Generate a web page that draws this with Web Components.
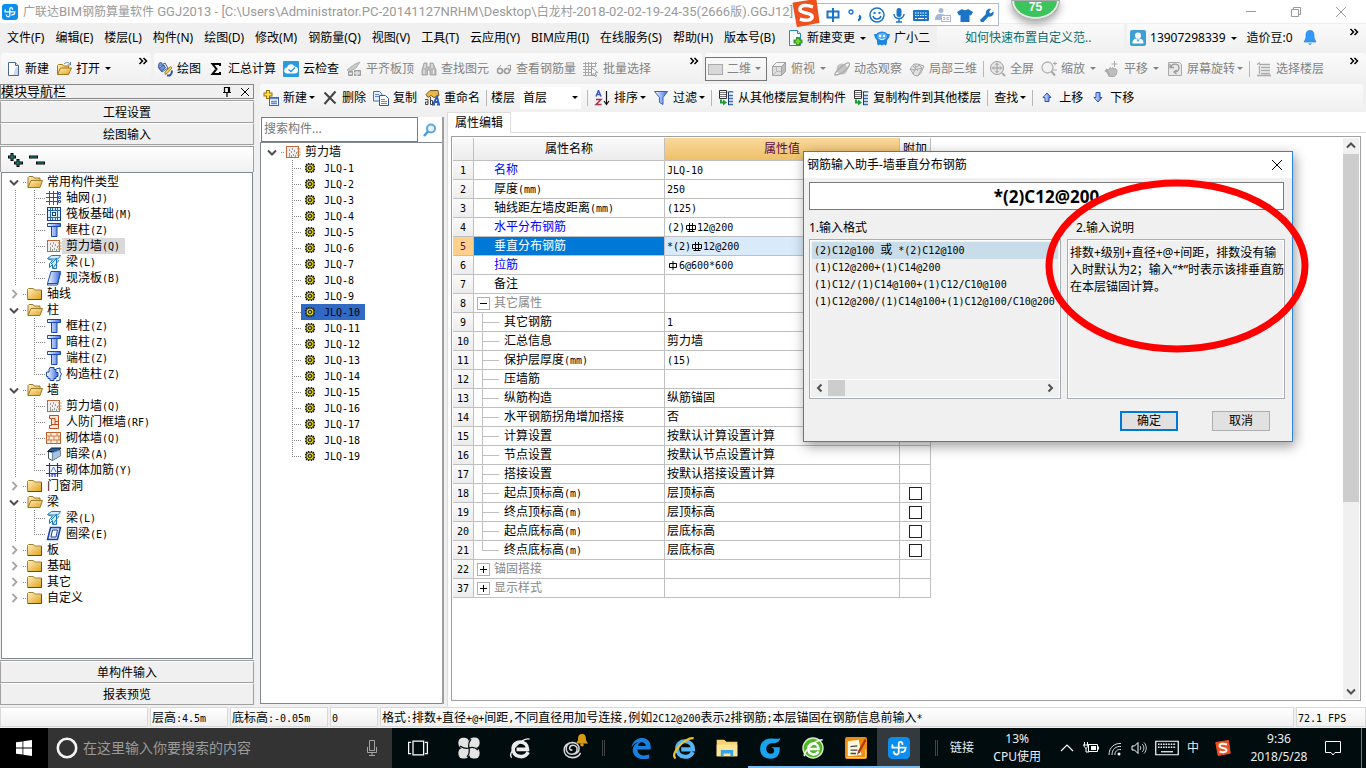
<!DOCTYPE html>
<html lang="zh-CN">
<head>
<meta charset="utf-8">
<title>广联达BIM钢筋算量软件 GGJ2013</title>
<style>
html, body { margin: 0; height: 100%; }
body { font: 12px/16px "Noto Sans", "Noto Sans CJK SC", sans-serif; color: #000; background: #f0f0f0; overflow: hidden; }
</style>
</head>
<body>
<ggj-desktop></ggj-desktop>
<script>
const BASE = `
*{box-sizing:border-box}
:host{display:block}
:host([hidden]){display:none}
button,input,select{font:inherit;color:inherit;margin:0;padding:0;border:0;background:none;border-radius:0;outline:0}
button{cursor:default;white-space:nowrap}
a{color:inherit;text-decoration:none}
ul{list-style:none;margin:0;padding:0}
.a{font-family:"DejaVu Sans Mono","Liberation Mono",monospace;font-size:10px;line-height:10px;white-space:pre}
`;
function define(name, css, render) {
  customElements.define(name, class extends HTMLElement {
    connectedCallback() {
      if (this.shadowRoot) return;
      const root = this.attachShadow({ mode: "open" });
      root.innerHTML = "<style>" + BASE + css + "</style>" + render(this);
    }
  });
}
// Half-width characters use a 10px monospace face beside 12px ideographs.
const mix = t => t.replace(/[\x20-\x7e]+/g, m => `<span class="a">${m}</span>`);

const G = "#9c9c9c", L = "#c8c8c8";
const folderShade = `<defs><linearGradient id="f" x1="0" y1="0" x2="1" y2="1"><stop offset="0" stop-color="#fff3b8"/><stop offset="1" stop-color="#e0a020"/></linearGradient></defs>`;
const blueShade = `<defs><linearGradient id="b"><stop offset="0" stop-color="#fff"/><stop offset="1" stop-color="#3a6ee0"/></linearGradient></defs>`;
const ICONS = {
  app: `<rect width="16" height="16" rx="3" fill="#0a8ff0"/><path d="M10.500 5.200C10.500 3 7.800 3 7.800 5.200V11c0 2.500-3.500 2.200-3.500-.2M3.200 6v1.800h9.600c0 2.200-1 3.200-3 3.200" fill="none" stroke="#fff" stroke-width="1.300" stroke-linecap="round"/>`,
  page: `<path d="M3.500 1.500h7l3 3v10h-10z" fill="#fff" stroke="#4a6890"/><path d="M10.500 1.500v3h3" fill="#dce8f6" stroke="#4a6890"/><path d="M11 6h2v8h-5z" fill="#c8d8ee"/>`,
  open: folderShade + `<path d="M1.500 13.500v-9l1-1h4l1 1.500h5v2" fill="url(#f)" stroke="#a87820"/><path d="M1.500 13.500l3-6.500h11l-3 6.500z" fill="url(#f)" stroke="#a87820"/><path d="M8 3c2-2 5-2 6 .5M14.500 1v3h-3" fill="none" stroke="#6a86a8"/>`,
  fopen: folderShade + `<path d="M1 13.500v-10l1-1h4l1 1.500h6v3" fill="url(#f)" stroke="#9a7a30"/><path d="M1 13.500l3-7h11.500l-2.500 7z" fill="url(#f)" stroke="#9a7a30"/>`,
  fclosed: folderShade + `<path d="M.5 13.500v-10l1-1h5l1 1.500h7v9.500z" fill="url(#f)" stroke="#a08038"/><path d="M14.500 4.500v9H1" fill="none" stroke="#6a5010"/>`,
  more: `<path d="M4.500 5l3 3-3 3M8.500 5l3 3-3 3" fill="none" stroke="#000" stroke-width="1.500"/>`,
  paint: `<path d="M1 6l7-4 3 5-6 4z" fill="#f4f8ff" stroke="#3a5c98"/><path d="M1.500 5c0-5 4-4 5 0M2 7l5-3 1.500 3-4 3z" fill="#6a94dc" stroke="#3a5c98"/><path d="M15 7l-5 5.500-2 1v-2.500L13.500 5.500z" fill="#f0c850" stroke="#80611c" stroke-width=".7"/><path d="M10 14.500c3 .5 5-1 5-5" stroke="#2850a8" fill="none" stroke-width="2"/>`,
  sigma: `<path d="M12 5V3H4.500L8.500 8l-4 5H12v-2" fill="none" stroke="#000" stroke-width="2"/>`,
  cloud: `<rect width="16" height="16" rx="1" fill="#2b9be0"/><path d="M4.500 12.500a3 3 0 0 1-.5-6 4 4 0 0 1 7.500-1 3.500 3.500 0 0 1 0 7z" fill="#fff"/><path d="M5.500 8.500l2.500 2 4-4" fill="none" stroke="#2b9be0" stroke-width="1.500"/>`,
  level: `<path d="M1 9l8-6 5-2-4 6-7 4z" fill="${L}" stroke="#b4b4b4"/><path d="M2.500 10.500h4v4h-4zM8.500 9.500h6v5h-6z" fill="#b8b8b8" stroke="${G}"/><path d="M8 12h6M11 10v5M3 12.500h3" stroke="#eee"/>`,
  bino: `<path d="M3 2h3v4h3V2h3l3 7v5H9V9H6.500v5H1V9z" fill="#bcbcbc" stroke="${G}" stroke-width=".8"/><path d="M4 3v4M11 3v4M3 9v4M12.500 9v4" stroke="#eee"/>`,
  glasses: `<path d="M1.500 8L5 4M14.500 10V4l-3 1" fill="none" stroke="${G}"/><circle cx="4" cy="10" r="2.500" fill="none" stroke="${G}" stroke-width="1.500"/><circle cx="11" cy="10" r="2.500" fill="none" stroke="${G}" stroke-width="1.500"/><path d="M6.500 10h2" stroke="${G}"/>`,
  batch: `<path d="M0 2.500h14M0 5.500h13M0 8.500h8M0 11.500h8M0 14.500h14M2.500 1v14M5.500 1v14M8.500 1v14M12.500 1v5" stroke="#a8a8a8" fill="none"/><path d="M8.500 6.500l6 5-2.500.5 1.500 3-1.500.5-1.500-3-2 1.500z" fill="#fff" stroke="#999"/>`,
  flat: `<rect x=".5" y="3.500" width="14" height="10" fill="#d8d8d8" stroke="#aaa"/>`,
  cube: `<path d="M1.500 5.500h9v9h-9z" fill="#ddd" stroke="#a4a4a4"/><path d="M1.500 5.500l4-4h9l-4 4z" fill="#f4f4f4" stroke="#a4a4a4"/><path d="M14.500 1.500v9l-4 4v-9z" fill="#bcbcbc" stroke="#a4a4a4"/><path d="M5.500 6v4.500H10M5.500 10.500l-4 4" stroke="#bbb" fill="none"/>`,
  orbit: `<circle cx="8" cy="8" r="5.500" fill="#c4c4c4"/><path d="M1 14C0 11 12 1 15 2s-5 12-14 12z" fill="none" stroke="#a8a8a8" stroke-width="1.300"/>`,
  part3d: `<path d="M1 8l4-5 4 0 6 2-3 7-3 3-4-1z" fill="#e2e2e2" stroke="#aaa"/><path d="M5 3l2 3 4-2M7 6l-3 7M9 3l4 4-4 8M1 8l4 1 8-2M4 5l5 5" fill="none" stroke="#a8a8a8"/>`,
  full: `<circle cx="7" cy="7" r="6.500" fill="#e4e4e4" stroke="${G}"/><path d="M7 2.500v9M2.500 7h9M5.500 4L7 2.500 8.500 4M5.500 10L7 11.500 8.500 10M4 5.500L2.500 7 4 8.500M10 5.500L11.500 7 10 8.500" fill="none" stroke="${G}"/><path d="M12 12l3 3" stroke="#aaa" stroke-width="2"/>`,
  zoom: `<circle cx="6.500" cy="6.500" r="5.500" fill="#f2f2f2" stroke="#b4b4b4" stroke-width="1.300"/><path d="M10.500 10.500l3.500 4" stroke="#a8a8a8" stroke-width="2"/><path d="M12 2.500h4M14 .5v4M12 9h4" stroke="#aaa"/>`,
  pan: `<path d="M2 8l3 1 1-2.500 1.500 1 1.500-1 1 1.500 1.500-.5 1.500 2-.5 3.500-2 2.500H5z" fill="#bdbdbd" stroke="#aaa"/><path d="M1 9.500l2.500 1.500 2 3" stroke="#aaa" fill="none" stroke-width="2"/><path d="M10.500 0v6M7.500 3h6" stroke="#aaa"/>`,
  rotate: `<path d="M1.500 1.500h11l2 2v11h-13z" fill="#e8e8e8" stroke="#aaa"/><path d="M4 6c1-4 8-4 8 1 0 2-2 4-4 4M3 3v3.500h4M9.500 9L7 11l2.500 2" fill="none" stroke="${G}" stroke-width="1.300"/>`,
  floors: `<path d="M3 3.500h11M5 6.500h9M1 3.500l3-2M5 9.500h9M3.500 5v8M5 12.500h9M1 14.500h14" stroke="#aaa" stroke-width="1.300" fill="none"/>`,
  pagenew: `<path d="M2.500.500h8l3 3v12h-11z" fill="#f4fafd" stroke="#2a8ab8"/><path d="M10.500.500v3h3" fill="#d0e8f4" stroke="#2a8ab8"/><path d="M11 7v9M6.500 11.500h9" stroke="#3a9a20" stroke-width="4"/><path d="M11 9v5M8.500 11.500h5" stroke="#78d838" stroke-width="2"/>`,
  robot: `<ellipse cx="8" cy="7" rx="6.500" ry="5.500" fill="#1f86e0"/><path d="M0 4l3 0v5l-2-1zM16 4l-3 0v5l2-1zM3 10h10v3l-1 2.500-2-1-2 1-2-1-2 1-1-2.500z" fill="#1f86e0"/><ellipse cx="8" cy="6.500" rx="5" ry="3.800" fill="#58b0f4"/><circle cx="6" cy="6" r="1.200" fill="#fff"/><circle cx="10" cy="6" r="1.200" fill="#fff"/><path d="M5.500 8.500c1 1.500 4 1.500 5 0" stroke="#fff" fill="none"/>`,
  user: `<rect width="16" height="16" rx="2" fill="#3f9fd2"/><circle cx="8" cy="5.500" r="3" fill="#fff"/><path d="M2.500 13.500c0-4 2-4.500 3.500-5h4c1.500.5 3.500 1 3.500 5z" fill="#fff"/><path d="M6.500 9.500L8 12l1.500-2.500z" fill="#3f9fd2"/>`,
  bell: `<path d="M8 .5c-4 0-4 3-4 6 0 2-1 3.500-2 5.500h12c-1-2-2-3.500-2-5.500 0-3 0-6-4-6z" fill="#3498f8" stroke="#1878e0" stroke-width=".6"/><path d="M6 13.500h4l-2 1.500z" fill="#1878e0"/>`,
  addnew: `<path d="M5 0v9M.5 4.500h9" stroke="#967010" stroke-width="4"/><path d="M5 1v7M1.500 4.500h7" stroke="#ffe040" stroke-width="2"/><rect x="6.500" y="7.500" width="9" height="8" fill="#fff" stroke="#3c64b0"/><path d="M7 8.500h8M8 11.500h6M8 13.500h6" stroke="#5c88d8" stroke-width="1.500"/>`,
  del: `<path d="M2.500 2.500l11 11M13.500 1.500L2.500 14" stroke="#444" stroke-width="2" fill="none"/>`,
  copy: `<path d="M.5 1.500h6l2.500 2.500v7H.500z" fill="#e8f0fc" stroke="#4870b8"/><path d="M6.500 5.500h6l3 3v7h-9z" fill="#fff" stroke="#3058a8"/><path d="M2 4.500h4M2 6.500h4M8 9.500h4M8 11.500h6M8 13.500h6" stroke="#5c88d8"/>`,
  rename: `<path d="M2 4.500l4-4h8l1 5-5 2-3-2-3 2z" fill="#e8b848" stroke="#7a5c1c"/><path d="M9 14.500l4-8 2 8M10.500 12h4M8 14.500h3M13 14.500h3" fill="none" stroke="#2858c0" stroke-width="1.800"/><path d="M1 9.500h3v5H1.500v-2.500H4M6.500 7v7.500h2v-4H7" stroke="#444" fill="none"/>`,
  sort: `<path d="M2 6.500L4.500.500 7 6.500M3 4.500h3" fill="none" stroke="#3c58b8" stroke-width="1.500"/><path d="M2 9.500h5l-5 5h5.500" fill="none" stroke="#b03050" stroke-width="1.500"/><path d="M12.500 1v13M10 11l2.500 3.500L15 11" fill="none" stroke="#111" stroke-width="1.200"/>`,
  funnel: blueShade + `<path d="M1.500 1.500h13L10 7.500v7l-3.500-2v-5z" fill="url(#b)" stroke="#3464c8"/>`,
  flcopy: `<path d="M1.500.500h7v8h-7z" fill="#fff" stroke="#333"/><path d="M2 2.500h6M2 4.500h6M2 6.500h6" stroke="#777"/><path d="M10 2.500c0-1 5-1 5 0M10 5.500h5M10 8.500h5M10 11.500h5M10 14.500h5" stroke="#3c6cb0" stroke-width="1.400" fill="none"/><path d="M10.500 2v13" stroke="#1c3c78"/><path d="M3 9.500v3h2" stroke="#18a038" fill="none" stroke-width="2"/><path d="M5 9.500l4 3-4 3z" fill="#18a038"/>`,
  up: blueShade + `<path d="M8 3l4 4.500h-2v4H6v-4H4z" fill="url(#b)" stroke="#2850c0"/>`,
  down: blueShade + `<path d="M8 12L4 7.500h2v-5h4v5h2z" fill="url(#b)" stroke="#2850c0"/>`,
  pin: `<path d="M5.500 3.500h5v5h-5zM4 8.500h8M8 9v4M9.500 3.500v5" stroke="#000" fill="none" stroke-width="1.200"/>`,
  close: `<path d="M4 4l8 8M12 4l-8 8" stroke="#000" fill="none"/>`,
  dclose: `<path d="M3 3l10 10M13 3L3 13" stroke="#000" fill="none"/>`,
  expandAll: `<path d="M5 1v8M1 5h8M11 7v8M7 11h9" stroke="#000" stroke-width="3"/><path d="M5 2v6M2 5h6M11 8v6M8 11h7" stroke="#18a098"/>`,
  collapseAll: `<path d="M0 5h9M7 11h9" stroke="#000" stroke-width="3"/><path d="M1 5h7M8 11h7" stroke="#18a098"/>`,
  axis: `<path d="M3.500 1v14M7.500 1v14M11.500 1v14M0 3.500h12M0 7.500h12M0 11.500h12" stroke="#2850b8"/><path d="M12.500 2.500h2v2h-2zM12.500 6.500h2v2h-2zM12.500 10.500h2v2h-2z" fill="#fff" stroke="#2850b8"/>`,
  raft: `<rect x="1.500" y="1.500" width="13" height="13" fill="#d8ecfc" stroke="#104080"/><path d="M4.500 2v12M11.500 2v12M2 4.500h12M2 11.500h12" stroke="#2868a8"/><rect x="6.500" y="6.500" width="3" height="3" fill="#fff" stroke="#104080"/><path d="M6.500 4v-2M9.500 4v-2M6.500 12v2M9.500 12v2" stroke="#2868a8"/>`,
  column: blueShade + `<path d="M1.500 1.500h13v3H11v10H5.500v-10h-4z" fill="url(#b)" stroke="#1848a8"/><path d="M5 4.500h6" stroke="#1848a8"/>`,
  wall: `<rect x="1.500" y="2.500" width="12" height="11" fill="#f2f0ee" stroke="#c06840"/><path d="M4 10h1M6 8h1M4 6h1M8 11h1M9 7h1M6 12h1M11 9h1M10 12h1M7 5h1M4 12h1" stroke="#444"/><path d="M12 5h3.500M12 8h3.500M12 11h3.500" stroke="#d88028"/>`,
  beam: `<path d="M1.500 4.500l4-3h9l-2 3-2 1v9h-4v-4l-3 3v-4l3-3z" fill="#d4ecfc" stroke="#2078c0"/><path d="M2 5h9M5 10l6-6M7 14l6-8" stroke="#2078c0"/>`,
  slab: blueShade + `<path d="M5 1.500h9.500l-3 12H1.500z" fill="url(#b)" stroke="#1850b8"/><path d="M1.500 13.500v1.500h10l3-12" fill="none" stroke="#1850b8"/>`,
  tiecol: blueShade + `<path d="M4 1.500h4v2h2v3h2v4h-2v2H8v2H4v-2H2v-2H.500V6H3V3.500z" fill="url(#b)" stroke="#1848a8"/><path d="M10 3l4-1v4l1.500 2-1.500 3v3l-4 1" fill="none" stroke="#1848a8"/>`,
  doorwall: `<path d="M3.500 1.500h9v13h-9v-3h2v-7h-2z" fill="#fbe4d4" stroke="#b85020"/><path d="M6 4.500h3v3h3M9 7.500v3H6M9 10.500h3" stroke="#b85020" fill="none"/>`,
  brick: `<rect x=".5" y="2.500" width="14" height="11" fill="#fdf0e4" stroke="#c06028"/><path d="M1 6h13M1 10h13M5 2.500V6M11 2.500V6M8 6v4M3 6v4M13 6v4M5 10v3.500M11 10v3.500" stroke="#d07838"/>`,
  hbeam: `<path d="M2.500 5.500l4 1v8l-4-2z" fill="#fff" stroke="#456"/><path d="M1.500 5.500l4-3.500h9.500l-3 3.500H6.500z" fill="#2c5c98" stroke="#123"/><path d="M6.500 6.500L14.500 4v6l-8 4.500z" fill="#a8c4e0" stroke="#6a88a8"/>`,
  rebar: `<path d="M3.500 3.500h8v8h-8zM0 3.500h16M0 11.500h16M3.500 1v14M11.500 1v14M6 15v-3h3v3M12 5.500h3v4h-3" fill="none" stroke="#1838b8" stroke-width="1.200"/><path d="M5 10l2.500-5L10 10" stroke="#4078d8" fill="none"/>`,
  ring: `<path d="M4.500 1.500h10l-3 12h-10z" fill="#d4e4fa" stroke="#1840a8" stroke-width="1.500"/><path d="M6.500 4h5l-1.500 7h-5z" fill="#fff" stroke="#1840a8"/>`,
  gear: `<path d="M6.500 3v10M9.500 3v10M3 6.500h10M3 9.500h10M4 4l8 8M12 4l-8 8" stroke="#222" stroke-width="1.300"/><circle cx="8" cy="8" r="4" fill="#f4ec10" stroke="#222" stroke-width=".8"/><path d="M8 4v8M4 8h8M5.500 5.500l5 5M10.500 5.500l-5 5" stroke="#444" stroke-width=".7"/><circle cx="8" cy="8" r="1.500" fill="#f8f480" stroke="#222"/>`,
  search: `<circle cx="9" cy="6.500" r="4" fill="#e8f4fd" stroke="#5aa8e0" stroke-width="2"/><path d="M6 9.500l-4 4.500" stroke="#4a98d8" stroke-width="2.500"/>`,
  left: `<path d="M9.500 4.500L6 8l3.500 3.500" fill="none" stroke="#505050" stroke-width="2"/>`,
  right: `<path d="M6.500 4.500L10 8l-3.500 3.500" fill="none" stroke="#505050" stroke-width="2"/>`,
  upc: `<path d="M4 9.500L8 5.500l4 4" fill="none" stroke="#505050" stroke-width="2"/>`,
  downc: `<path d="M4 6.500l4 4 4-4" fill="none" stroke="#505050" stroke-width="2"/>`,
  rightc: `<path d="M6.500 4l4 4-4 4" fill="none" stroke="#a6a6a6" stroke-width="1.800"/>`,
  min: `<path d="M3 7.500h10" stroke="#999"/>`,
  restore: `<path d="M3.500 5.500h7v7h-7zM5.500 5.500v-2h7v7h-2" fill="none" stroke="#999"/>`,
  xgray: `<path d="M3 3l10 10M13 3L3 13" stroke="#999" fill="none"/>`,
  sogou: `<path d="M.8 2.500L13.500.5l1.700 12.700-12 2.300z" fill="#f0501c" stroke="#f0501c" stroke-linejoin="round"/><path d="M12 4.500C8 3 4.500 3.500 4.500 6s7 1.500 7 4-4 2.500-7 1.500" fill="none" stroke="#fff" stroke-width="2"/>`,
  zhong: `<path d="M2.500 4.500h11v6h-11zM8 1v14" fill="none" stroke="#1b74c8" stroke-width="2"/>`,
  punct: `<circle cx="4" cy="5" r="2" fill="none" stroke="#1b74c8" stroke-width="1.300"/><path d="M12 8.500c2 1 1.500 4-1 5" fill="none" stroke="#1b74c8" stroke-width="2.400"/>`,
  smile: `<circle cx="8" cy="8" r="7" fill="none" stroke="#1b74c8" stroke-width="1.500"/><path d="M5.500 5v2M10.500 5v2" stroke="#1b74c8" stroke-width="2"/><path d="M4 9c1 4 7 4 8 0" fill="none" stroke="#1b74c8" stroke-width="1.400"/>`,
  mic: `<rect x="5.500" y="1" width="5" height="9" rx="2.500" fill="#1b74c8"/><path d="M3 7c0 6 10 6 10 0M8 12v3M5 15h6" fill="none" stroke="#1b74c8" stroke-width="1.500"/>`,
  kbd: `<rect y="3" width="16" height="11" rx="1" fill="#1b74c8"/><path d="M2 6h12M2 8.500h12" stroke="#fff" stroke-dasharray="1.500 1"/><path d="M2 11.500h2M5 11.500h6M12 11.500h2" stroke="#fff"/>`,
  person: `<circle cx="6" cy="3.500" r="2.500" fill="#a8b8d4"/><path d="M0 13c0-6 3-6 6-6s4 1 5 3v3z" fill="#a8b8d4"/><rect x="6.500" y="8.500" width="9" height="6" fill="#fff" stroke="#a8b8d4"/><path d="M8 10.500h2v2H8M14 10.500h-2v2h2" fill="none" stroke="#a8b8d4"/>`,
  shirt: `<path d="M5 2c1 1.500 5 1.500 6 0l5 3-2 3.500-1.500-.5V15h-9V8L2 8.500 0 5z" fill="#1b74c8"/>`,
  wrench: `<path d="M2 15l-1-2 6-6c-1-3 2-6 5-5l-2 3 1.500 1.500 3-2c1 3-2 6-5 5l-5 5.500z" fill="#1b74c8"/>`,
  win: `<path d="M0 2.300l6.500-.9v6.200H0zM7.300 1.300L16 0v7.600H7.300zM0 8.400h6.500v6.200L0 13.700zM7.300 8.400H16V16l-8.700-1.300z" fill="#fff"/>`,
  cortana: `<circle cx="8" cy="8" r="6.700" fill="none" stroke="#f4f4f4" stroke-width="1.900"/>`,
  micline: `<path d="M5.500.500h5v10h-5zM3.500 7v5.500h9V7M8 12.500v3M5 15.500h6" fill="none" stroke="#a4a4a4"/>`,
  taskview: `<path d="M4 2.500h8.500v11H4zM2.500 3.500H.500v9h2M13.500 3.500h2v9h-2" fill="none" stroke="#fff"/>`,
  pinwheel: `<g fill="#e4e4e4"><rect x=".3" y=".5" width="7.700" height="7.700" rx="3.300"/><rect x="8" y=".3" width="7.700" height="7.700" rx="3.300"/><rect x="8" y="8" width="7.700" height="7.700" rx="3.300"/><rect x=".3" y="8" width="7.700" height="7.700" rx="3.300"/><circle cx="8" cy="8" r="3"/></g><path d="M1.500 6.500c3 2 5 2 6.500 1.500s4-1 6.500 1.500M9.500 1.500C7.500 4 7.500 6 8 8s.5 4-1.500 6.500" stroke="#000c0e" fill="none" stroke-width=".9"/>`,
  ewhite: `<path d="M14 11C11 16.500 3 14.500 3 8.500c0-6.500 10.500-6.500 10.500.5H5.500" fill="none" stroke="#ececec" stroke-width="2.600"/><path d="M2 15C-2 12 10 0 15 1.500" fill="none" stroke="#ececec"/>`,
  spiral: `<path d="M9 9.500c-3 .5-2.500-3.500.5-3.500 4 0 4 6-.5 6.500C3 13 3 4.500 9 4M9 12.500c7 0 6-8.500 0-8.500M9 4C1 4 1 15 9 15c3 0 5-1.500 6-3.500" fill="none" stroke="#d8d8d8" stroke-width="1.100"/>`,
  belly: `<path d="M8 1c-4 0-4.500 3-4.500 6 0 2-1.500 3-2.500 5h14c-1-2-2.500-3-2.500-5 0-3-.5-6-4.500-6z" fill="#d89a10"/><circle cx="8" cy="13.500" r="2" fill="#d89a10"/>`,
  edge: `<path d="M1 8C2 1 8 0 11 1c3 1 4.500 4 4 8H5.500c0 5 6 5 8.500 3.500v3C8 17.500 2 15 2 9.500 2 7 4 4.500 6 4 3.500 4 2 6 1 8zM6 6.500h5.500C11 3 6 3 6 6.500z" fill="#1a7fdc"/>`,
  ie: `<path d="M14.500 11C12 16.500 3 15 3 8.500c0-7.500 11.500-7 11.500.5H6" fill="none" stroke="#58b4f4" stroke-width="3"/><path d="M2 15.500C-3 13 9-.500 15 1" fill="none" stroke="#f0c020" stroke-width="1.600"/>`,
  explorer: `<path d="M.500 2h5.500l1.500 1.500H15.500V14H.500z" fill="#f8d470"/><path d="M.500 5.500h15V14H.500z" fill="#fde498"/><path d="M3.500 14V9.500h9V14h-2v-2h-5v2z" fill="#34a4e4"/>`,
  gblue: `<path d="M15.500.5C14 2 12 1 9 1 4 1 .8 4 .8 8.500c0 5 3.500 7.300 7.700 7.300 4.500 0 7-3 6.500-8.300H8.500c2 .5 2.800 1.500 2.500 3-.5 2-4.500 2.500-5.500-.5C4.500 6.500 7 4.500 10 4.500c3 0 5-1 5.500-4z" fill="#18a4f0"/>`,
  egreen: `<circle cx="8" cy="8" r="7.300" fill="#50b828" stroke="#d4f0c4"/><path d="M12 10.500c-2 3.500-7.500 2.500-7.500-2 0-5 7.500-5 7.500.3H5.500" fill="none" stroke="#fff" stroke-width="1.800"/><path d="M2 14C0 12 9 2 15 2" stroke="#fff" fill="none"/>`,
  note: `<rect width="16" height="16" rx="1.500" fill="#f08c10"/><path d="M2 3l8-1 2 11-10 1z" fill="#fff8dc"/><path d="M4 7l5-.5M4 9.500h5M4 12h4" stroke="#444"/><path d="M14.500 1L9.500 10l-.8 3L11 11 15.500 2.500z" fill="#b03818"/><path d="M1 15h14V9" stroke="#f8d468" fill="none"/>`,
  caret: `<path d="M2 11l6-6 6 6" fill="none" stroke="#fff" stroke-width="1.200"/>`,
  battery: `<path d="M5.500 4.500h9v7h-9zM15.500 6.500v3" fill="none" stroke="#fff"/><path d="M8 6h5v4H8z" fill="#fff"/><path d="M1.500 2v3M4.500 2v3M0 5h6M1 5c0 4 4 4 4 0M3 8v4h3" fill="none" stroke="#fff"/>`,
  wifi: `<circle cx="12" cy="14" r="1.500" fill="#fff"/><path d="M8 15c-.5-3 2-6 6-5.500M5 15c0-6 4-9 9-8.500M2 15C2 7 8 3 14 3.500" fill="none" stroke="#ddd"/>`,
  sound: `<path d="M1 6h2.500L7 2.500v11L3.500 10H1z" fill="none" stroke="#fff"/><path d="M9 6c1 1 1 3 0 4M11 4c2.500 2 2.500 6 0 8M13 2.500c3 3 3 8 0 11" fill="none" stroke="#ccc"/>`,
  tkbd: `<path d="M.500 3.500h15v9h-15z" fill="none" stroke="#fff" stroke-width=".8"/><path d="M2 5.500h12M2 7.500h12" stroke="#fff" stroke-dasharray="1 .7" stroke-width=".9"/><path d="M4 10.500h8" stroke="#fff" stroke-width=".8"/>`,
  notify: `<path d="M.500 1.500h15v11H10l-2 2.500-2-2.500H.500z" fill="none" stroke="#fff"/>`,
  hrb400: `<path d="M1.500 4.500h9v4h-9zM4.500 2v9M7.500 2v9M2.500 10.500h7" fill="none" stroke="#000"/>`,
  hpb300: `<path d="M2.500 4.500h7v4h-7zM6 2v9" fill="none" stroke="#000"/>`
};
define("g-icon", `:host{width:16px;height:16px;flex:none}svg{display:block;width:100%;height:100%}`,
  el => `<svg viewBox="${/^h[rp]b/.test(el.getAttribute("name")) ? "0 0 12 12" : "0 0 16 16"}" aria-hidden="true">${ICONS[el.getAttribute("name")]}</svg>`);

define("tool-item", `
:host{flex:none}
button{display:flex;align-items:center;gap:4px;height:24px}
:host([disabled]) button{color:#838383}
.d{display:flex;justify-content:center;margin-left:-4px;padding-left:4px;box-sizing:content-box;width:8px}
.d::after{content:"";border:3px solid transparent;border-top-color:currentColor;border-bottom-width:0}
:host([drop=tight]) .d{padding-left:2px;width:6px}
:host([boxed]) button{border:1px solid #777;padding:0 2px;width:62px;gap:3px}
`, el => `<button ${el.hasAttribute("disabled") ? "disabled" : ""}>${el.getAttribute("icon") ? `<g-icon name="${el.getAttribute("icon")}"></g-icon>` : ""}<span><slot></slot></span>${el.hasAttribute("drop") ? '<span class="d"></span>' : ""}</button>`);

const sep = '<i class="sep"></i>';
const item = (icon, text, opt = "") => `<tool-item icon="${icon}" ${opt}>${text}</tool-item>`;

define("title-bar", `
:host{display:flex;height:23px;background:#fff;align-items:center;padding:0 3px 0 2px;color:#9a9a9a}
.t{margin-left:5px;flex:1;white-space:nowrap;overflow:hidden}
.r{font-family:Roboto,"Noto Sans",sans-serif;font-size:13px}
button{width:45px;height:20px;display:grid;place-items:center}
`, () => `<g-icon name="app"></g-icon><div class="t">${"广联达BIM钢筋算量软件 GGJ2013 - [C:\\Users\\Administrator.PC-20141127NRHM\\Desktop\\白龙村-2018-02-02-19-24-35(2666版).GGJ12]".replace(/[\x20-\x7e]+/g, m => `<span class="r">${m}</span>`)}</div>
<button aria-label="最小化"><g-icon name="min"></g-icon></button><button aria-label="还原"><g-icon name="restore"></g-icon></button><button aria-label="关闭"><g-icon name="xgray"></g-icon></button>`);

define("menu-row", `
:host{display:flex;height:30px;align-items:center}
nav{display:flex;padding-left:7px;gap:11px;margin-right:12px}
.tools{display:flex;gap:7px;margin-right:7px}
.band{height:28px;background:linear-gradient(#fafafa,#f0f0f0);display:flex;align-items:center}
.ad{width:187px;padding-left:28px;color:#0b6e6e}
.acc{flex:1;margin-left:3px;padding-left:3px;gap:9px}
.acc g-icon:last-child{margin-left:auto;margin-right:4px;align-self:flex-start}
`, () => `<nav>${["文件(F)","编辑(E)","楼层(L)","构件(N)","绘图(D)","修改(M)","钢筋量(Q)","视图(V)","工具(T)","云应用(Y)","BIM应用(I)","在线服务(S)","帮助(H)","版本号(B)"].map(t => `<button>${t}</button>`).join("")}</nav>
<div class="tools">${item("pagenew", "新建变更", "drop")}${item("robot", "广小二")}</div>
<div class="band ad"><a href="#tip">如何快速布置自定义范..</a></div>
<div class="band acc">${item("user", "13907298339", "drop")}<span>造价豆:0</span><g-icon name="bell"></g-icon><g-icon name="more"></g-icon></div>`);

define("tool-row", `
:host{display:flex;height:31px;gap:3px;padding-left:1px}
.band{display:flex;align-items:center;gap:7px;background:linear-gradient(#fbfbfb,#efefef);border-radius:3px;padding-left:4px;overflow:hidden}
.sep{width:1px;height:16px;background:#b8b8b8;margin:0 -1px;flex:none}
.m{margin-left:auto;align-self:flex-start}
.one{width:150px}.two{width:548px;padding-left:3px}.three{flex:1;padding-left:0}
.three .m{margin-right:4px}
.three tool-item[boxed]{margin-right:-3px}
`, () => `<div class="band one">${item("page", "新建")}${item("open", "打开", "drop")}<g-icon class="m" name="more"></g-icon></div>
<div class="band two">${item("paint", "绘图")}${item("sigma", "汇总计算")}${item("cloud", "云检查")}${item("level", "平齐板顶", "disabled")}${item("bino", "查找图元", "disabled")}${item("glasses", "查看钢筋量", "disabled")}${item("batch", "批量选择", "disabled")}<g-icon class="m" name="more"></g-icon></div>
<div class="band three">${item("flat", "二维", "boxed drop disabled")}${item("cube", "俯视", "drop disabled")}${item("orbit", "动态观察", "disabled")}${item("part3d", "局部三维", "disabled")}${sep}${item("full", "全屏", "disabled")}${item("zoom", "缩放", "drop disabled")}${item("pan", "平移", "drop disabled")}${item("rotate", "屏幕旋转", 'drop="tight" disabled')}${sep}${item("floors", "选择楼层", "disabled")}<g-icon class="m" name="more"></g-icon></div>`);

define("edit-row", `
:host{display:flex;height:27px;align-items:center;gap:7px;background:linear-gradient(#fbfbfb,#f0f0f0);border-radius:3px;padding-left:3px;margin-right:3px}
.sep{width:1px;height:16px;background:#b8b8b8;margin:0 -1px;flex:none}
label{display:flex;align-items:center;gap:5px;margin-left:-2px;white-space:nowrap}
.c{position:relative;width:61px;background:#fff}
select{appearance:none;width:100%;height:22px;padding-left:3px}
.c::after{content:"";position:absolute;right:3px;top:9px;border:3px solid transparent;border-top-color:#000;border-bottom-width:0;pointer-events:none}
`, () => `${item("addnew", "新建", 'drop="tight"')}${item("del", "删除")}${item("copy", "复制")}${item("rename", "重命名")}${sep}
<label>楼层<span class="c"><select><option>首层</option></select></span></label>${sep}
${item("sort", "排序", 'drop="tight"')}${item("funnel", "过滤", 'drop="tight"')}${sep}${item("flcopy", "从其他楼层复制构件")}${item("flcopy", "复制构件到其他楼层")}${sep}${item("", "查找", 'drop="tight"')}${sep}${item("up", "上移")}${item("down", "下移")}`);

// One line of a tree: kind is "group" (open or closed) or "leaf".
define("tree-row", `
:host{display:flex;height:16px;align-items:center;white-space:nowrap}
.v,.h{align-self:stretch;flex:none}
.v{width:19px;background:repeating-linear-gradient(#888 0 1px,#0000 1px 2px) 0 0/1px 100% no-repeat}
.h{width:12px;background:repeating-linear-gradient(#888 0 1px,#0000 1px 2px) 0 0/1px 100% no-repeat,repeating-linear-gradient(90deg,#888 0 1px,#0000 1px 2px) 0 8px/100% 1px no-repeat}
:host([last]) .h{background-size:1px 9px,100% 1px}
.n{width:3px;height:1px;background:repeating-linear-gradient(90deg,#888 0 1px,#0000 1px 2px);margin:0 1px}
.s{display:flex}
.t{padding:0 5px 0 4px;height:16px;line-height:16px}
:host([kind=group]){padding-left:3px}
:host([kind=leaf]){padding-left:12px}
:host([selected]) .t{background:#d9d9d9}
:host([flat]){padding-left:3px}
:host([flat][kind=leaf]){padding-left:31px}
:host([flat][kind=leaf]) .h{width:9px}
:host([flat]) .s{padding-left:1px}
:host([flat]) .s .t{padding-left:6px}
:host([flat][selected]) .s,:host([flat][selected]) .t{background:#316ac5}
`, el => {
  const a = n => el.getAttribute(n), name = mix(a("label"));
  if (a("kind") === "group") return `<g-icon name="${el.hasAttribute("open") ? "downc" : "rightc"}"></g-icon><span class="n"></span><g-icon name="${a("icon")}"></g-icon><span class="t">${name}</span>`;
  return (el.hasAttribute("flat") ? "" : '<span class="v"></span>') + `<span class="h"></span><span class="s"><g-icon name="${a("icon")}"></g-icon><span class="t">${name}</span></span>`;
});

const NAV = [
  ["常用构件类型", ["axis 轴网(J)", "raft 筏板基础(M)", "column 框柱(Z)", "wall 剪力墙(Q) *", "beam 梁(L)", "slab 现浇板(B)"]],
  ["轴线"],
  ["柱", ["column 框柱(Z)", "column 暗柱(Z)", "column 端柱(Z)", "tiecol 构造柱(Z)"]],
  ["墙", ["wall 剪力墙(Q)", "doorwall 人防门框墙(RF)", "brick 砌体墙(Q)", "hbeam 暗梁(A)", "rebar 砌体加筋(Y)"]],
  ["门窗洞"],
  ["梁", ["beam 梁(L)", "ring 圈梁(E)"]],
  ["板"], ["基础"], ["其它"], ["自定义"]
];
define("nav-panel", `
:host{display:flex;flex-direction:column;width:254px}
.cap{display:flex;align-items:center;height:15px;border:1px solid #888;font-size:13px;line-height:13px;margin-bottom:2px;gap:2px}
.cap span{flex:1}
.big{display:block;width:100%;height:22px;border:1px solid #a0a0a0;border-top-color:#fff;box-shadow:0 -1px #a0a0a0;text-align:center;flex:none;padding-top:1px}
.bar{display:flex;gap:6px;height:26px;align-items:center;padding-left:6px;background:linear-gradient(#fff,#f0f0f0);border:1px solid #a0a0a0;border-bottom:0;margin-top:1px}
.tree{flex:1;background:#fff;border:1px solid #828790;margin:0 1px 2px 1px;padding:1px 0 0 1px;min-height:0;overflow:hidden}
`, () => `<div class="cap"><span>模块导航栏</span><g-icon name="pin"></g-icon><g-icon name="close"></g-icon></div>
<button class="big">工程设置</button><button class="big">绘图输入</button>
<div class="bar"><g-icon name="expandAll"></g-icon><g-icon name="collapseAll"></g-icon></div>
<div class="tree">${NAV.map(([g, kids]) => `<tree-row kind="group" ${kids ? "open" : ""} icon="${kids ? "fopen" : "fclosed"}" label="${g}"></tree-row>` +
    (kids || []).map((k, i) => { const [ic, t, s] = k.split(" "); return `<tree-row kind="leaf" icon="${ic}" label="${t}" ${s ? "selected" : ""} ${i === kids.length - 1 ? "last" : ""}></tree-row>`; }).join("")).join("")}</div>
<button class="big">单构件输入</button><button class="big">报表预览</button>`);

define("component-panel", `
:host{display:flex;flex-direction:column;width:184px;background:#fff;border-right:2px solid #a0a0a0}
.find{display:flex;height:25px;margin:0 0 0 1px;align-items:center}
input{width:157px;height:25px;border:1px solid #7a7a7a;padding:0 2px 2px;flex:none}
input::placeholder{color:#777;opacity:1}
button{flex:1;display:grid;place-items:center}
.tree{flex:1;border:1px solid #828790;border-right:0;padding-top:1px;min-height:0;overflow:hidden}
`, () => `<div class="find"><input aria-label="搜索构件" placeholder="搜索构件..."><button aria-label="搜索"><g-icon name="search"></g-icon></button></div>
<div class="tree"><tree-row flat open kind="group" icon="wall" label="剪力墙"></tree-row>${Array.from({ length: 19 }, (_, i) => `<tree-row flat kind="leaf" icon="gear" label="JLQ-${i + 1}" ${i === 9 ? "selected" : ""} ${i === 18 ? "last" : ""}></tree-row>`).join("")}</div>`);

// number, name, value, kind: b = blue name, s = selected, p = plain, g = group, c = child, k = child with tick box
const ROWS = [
  [1, "名称", "JLQ-10", "b"], [2, "厚度(mm)", "250", "p"], [3, "轴线距左墙皮距离(mm)", "(125)", "p"],
  [4, "水平分布钢筋", "(2)#12@200", "b"], [5, "垂直分布钢筋", "*(2)#12@200", "s"], [6, "拉筋", "$6@600*600", "b"],
  [7, "备注", "", "p"], [8, "其它属性", "", "g", "-"], [9, "其它钢筋", "1", "c"], [10, "汇总信息", "剪力墙", "c"],
  [11, "保护层厚度(mm)", "(15)", "c"], [12, "压墙筋", "", "c"], [13, "纵筋构造", "纵筋锚固", "c"],
  [14, "水平钢筋拐角增加搭接", "否", "c"], [15, "计算设置", "按默认计算设置计算", "c"], [16, "节点设置", "按默认节点设置计算", "c"],
  [17, "搭接设置", "按默认搭接设置计算", "c"], [18, "起点顶标高(m)", "层顶标高", "k"], [19, "终点顶标高(m)", "层顶标高", "k"],
  [20, "起点底标高(m)", "层底标高", "k"], [21, "终点底标高(m)", "层底标高", "k z"], [22, "锚固搭接", "", "g", "+"], [37, "显示样式", "", "g", "+"]
];
const sym = { "#": '<g-icon name="hrb400"></g-icon>', "$": '<g-icon name="hpb300"></g-icon>' };
const value = v => v.split(/([#$])/).map(p => sym[p] || mix(p)).join("");
define("property-panel", `
:host{display:flex;flex-direction:column;background:#fff;border-left:1px solid #dcdcdc;min-width:0}
.tabs{display:flex;height:21px;margin-bottom:3px}
.tab{width:63px;border:1px solid #dcdcdc;border-bottom:0;border-left:0;text-align:center}
.fill{flex:1;border-bottom:1px solid #dcdcdc}
.box{flex:1;display:flex;border:1px solid #a0a0a0;margin:0 5px 6px 3px;min-height:0;padding:1px}
.g{flex:1;min-width:0}
table{border-collapse:separate;border-spacing:0;table-layout:fixed;width:478px}
col.n{width:21px}col.a1{width:191px}col.v{width:235px}
th{font-weight:400;background:linear-gradient(#fafafa,#ececec)}
thead th{height:23px;padding:0;border-bottom:1px solid #c0c0c0;border-right:1px solid #c0c0c0}
thead th.on{background:linear-gradient(#f9d99c,#efc068);color:#5c0a4c}
tbody th,td{height:19px;padding:0;border-right:1px solid #c0c0c0;border-bottom:1px solid #c0c0c0;line-height:18px;white-space:nowrap}
tbody td:nth-child(3){padding-left:2px}
td>div{display:flex;height:18px;padding-left:20px}
.b{color:#00f}
.s td:nth-child(2){background:#0078d7;color:#fff}.s td:nth-child(3){background:#d9eafa}.s th{background:#ffd08c;color:#5c0a4c}
.b td+td,.b th{color:#000}
td>div.gr{color:#888;padding-left:3px;gap:4px;align-items:center}
.pm{width:13px;height:13px;border:1px solid #b0b0b0;background:linear-gradient(#000,#000) 50% 50%/7px 1px no-repeat}
.pm.plus{background:linear-gradient(#000,#000) 50% 50%/7px 1px no-repeat,linear-gradient(#000,#000) 50% 50%/1px 7px no-repeat}
td>div.ch{padding-left:8px;gap:5px}
.ln{width:17px;height:19px;background:linear-gradient(#c0c0c0,#c0c0c0) 0 0/1px 100% no-repeat,linear-gradient(#c0c0c0,#c0c0c0) 0 9px/100% 1px no-repeat}
.z .ln{background-size:1px 10px,100% 1px}
td g-icon{display:inline-block;width:12px;height:12px;vertical-align:-2px}
input{appearance:none;display:block;width:13px;height:13px;border:1px solid #222;background:#fff;margin:auto}
.bar{width:16px;display:flex;flex-direction:column;background:#f0f0f0;height:100%}
.thumb{height:62%;background:#cdcdcd}
.bar g-icon:last-child{margin-top:auto}
`, () => `<div class="tabs"><button class="tab">属性编辑</button><div class="fill"></div></div>
<div class="box"><div class="g"><table><colgroup><col class="n"><col class="a1"><col class="v"><col></colgroup>
<thead><tr><th></th><th>属性名称</th><th class="on">属性值</th><th>附加</th></tr></thead>
<tbody>${ROWS.map(([n, name, v, k, s]) => {
  const kind = k[0], label = mix(name);
  const cell = kind === "g" ? `<div class="gr"><span class="pm ${s === "+" ? "plus" : ""}"></span>${label}</div>`
    : kind === "c" || kind === "k" ? `<div class="ch"><span class="ln"></span><span>${label}</span></div>` : `<div><span>${label}</span></div>`;
  return `<tr class="${k}"><th scope="row">${mix(String(n))}</th><td>${cell}</td><td>${value(v)}</td><td>${kind === "k" ? `<input type="checkbox" aria-label="${name} 附加">` : ""}</td></tr>`;
}).join("")}</tbody></table></div>
<div class="bar"><g-icon name="upc"></g-icon><div class="thumb"></div><g-icon name="downc"></g-icon></div></div>`);

define("assist-dialog", `
:host{position:absolute;left:803px;top:151px;width:490px;background:#f0f0f0;border:1px solid #2a84dc;box-shadow:2px 4px 12px rgba(0,0,0,.4)}
header{display:flex;align-items:center;height:26px;background:#fff;padding:0 7px 0 3px;justify-content:space-between}
main{padding:4px 8px 10px 5px}
.val{display:block;width:475px;height:28px;border:1px solid #7a7a7a;background:#fff;text-align:center;font-size:17px;font-weight:700}
.cols{display:grid;grid-template-columns:252px 218px;column-gap:6px}
h2{font-size:12px;line-height:16px;font-weight:400;margin:10px 0 3px}
h2+h2{padding-left:9px}
.list{height:160px;border:1px solid #a8acb4;box-shadow:inset 0 0 0 1px #fff;padding:2px;display:flex;flex-direction:column}
li{height:17px;line-height:16px;padding-left:2px;white-space:nowrap}
li[aria-selected=true]{background:#c8dcea}
.sb{margin-top:auto;display:flex;height:17px;border-top:1px solid #fff}
.th{width:17px;background:#cdcdcd}
.sb g-icon:last-child{margin-left:auto}
p{margin:0;line-height:17px;padding:2px 0 0;white-space:nowrap}
footer{display:flex;justify-content:flex-end;gap:34px;padding:12px 14px 0 0}
footer button{width:58px;height:20px;border:1px solid #adadad;background:#e1e1e1}
footer button:first-child{border:2px solid #0078d7}
`, () => `<header>钢筋输入助手-墙垂直分布钢筋<g-icon name="dclose"></g-icon></header>
<main><input class="val" aria-label="钢筋信息" value="*(2)C12@200">
<div class="cols"><h2>1.输入格式</h2><h2>2.输入说明</h2>
<div class="list"><ul role="listbox">${["(2)C12@100 或 *(2)C12@100", "(1)C12@200+(1)C14@200", "(1)C12/(1)C14@100+(1)C12/C10@100", "(1)C12@200/(1)C14@100+(1)C12@100/C10@200"].map((t, i) => `<li role="option" aria-selected="${i === 0}">${mix(t)}</li>`).join("")}</ul>
<div class="sb"><g-icon name="left"></g-icon><div class="th"></div><g-icon name="right"></g-icon></div></div>
<div class="list"><p>排数+级别+直径+@+间距，排数没有输<br>入时默认为2；输入“*”时表示该排垂直筋<br>在本层锚固计算。</p></div></div>
<footer><button>确定</button><button>取消</button></footer></main>`);

define("status-bar", `
:host{display:grid;grid-template-columns:148px 78px 98px 48px 1fr 70px;gap:2px;height:20px;margin-bottom:1px}
div{border:1px solid #d8d8d8;background:linear-gradient(#fff,#f0f0f0);padding-left:1px;line-height:20px;height:20px;white-space:nowrap}
`, () => ["", "层高:4.5m", "底标高:-0.05m", "0", "格式:排数+直径+@+间距,不同直径用加号连接,例如2C12@200表示2排钢筋;本层锚固在钢筋信息前输入*", "72.1 FPS"].map(t => `<div>${mix(t)}</div>`).join(""));

define("task-bar", `
:host{display:flex;height:40px;background:#000c0e;color:#fff}
button{display:grid;place-items:center;height:40px;flex:none;position:relative}
.start{width:48px;background:#000}
label{display:flex;align-items:center;width:344px;background:#333;padding:0 12px 0 8px;gap:5px}
input{flex:1;font-size:14px;min-width:0}
input::placeholder{color:#9a9a9a;opacity:1}
.w{width:51px}.i{width:43px}
.tv{width:20px;height:20px}
.lg{width:22px;height:22px}
.run{box-shadow:inset 0 -2px #76b9ed}
.cur{background:#33393c}
.rule{width:3px;height:16px;border:solid #444;border-width:0 1px;align-self:center;margin:0 14px 0 6px}
.rule.r{margin:0 12px 0 15px}
.al{position:absolute;right:7px;top:5px;width:14px;height:14px}
.c{align-self:center;text-align:center;line-height:18px;white-space:nowrap;color:#eee}
.tray{display:flex;margin-left:auto;align-items:center;gap:8px}
.cpu{margin-right:10px}
.clock{width:60px;margin:0 8px 0 10px}
.n{padding:0 20px 0 0;border-right:1px solid #777;margin-right:4px}
.k{width:24px;height:24px}
`, () => `<button class="start" aria-label="开始"><g-icon name="win"></g-icon></button>
<label><g-icon class="lg" name="cortana"></g-icon><input aria-label="搜索" placeholder="在这里输入你要搜索的内容"><g-icon name="micline"></g-icon></label>
<button class="w" aria-label="任务视图"><g-icon class="tv" name="taskview"></g-icon></button>
${[["pinwheel", "风车"], ["ewhite", "浏览器"], ["spiral", "助手"]].map(([n, t]) => `<button class="w" aria-label="${t}"><g-icon class="lg" name="${n}"></g-icon>${n === "spiral" ? '<g-icon class="al" name="belly"></g-icon>' : ""}</button>`).join("")}
<i class="rule"></i>
${["edge", "ie", "explorer", "gblue run", "egreen run", "note run", "app run cur"].map(s => { const [n, ...c] = s.split(" "); return `<button class="i ${c.join(" ")}" aria-label="${n}"><g-icon class="lg" name="${n}"></g-icon></button>`; }).join("")}
<i class="rule r"></i><span class="c">链接</span>
<div class="tray"><span class="c cpu">13%<br>CPU使用</span><g-icon name="caret"></g-icon><g-icon name="battery"></g-icon><g-icon name="wifi"></g-icon><g-icon name="sound"></g-icon><g-icon class="k" name="tkbd"></g-icon><span class="c">中</span><span></span><g-icon name="sogou"></g-icon><span class="c clock">9:36<br>2018/5/28</span><button class="n" aria-label="通知"><g-icon name="notify"></g-icon></button></div>`);

define("ime-bar", `
:host{position:absolute;left:800px;top:3px;width:199px;height:23px;background:#fff;border:1px solid #a8bcd8;display:flex;align-items:center;padding-left:24px;gap:6px}
.logo{position:absolute;left:-9px;top:-5px;width:28px;height:28px}
`, () => `<g-icon class="logo" name="sogou"></g-icon>${["zhong", "punct", "smile", "mic", "kbd", "person", "shirt", "wrench"].map(n => `<g-icon name="${n}"></g-icon>`).join("")}`);

define("speed-ball", `
:host{position:absolute;left:1011px;top:0;width:49px;height:20px;border-radius:0 0 25px 25px/0 0 20px 20px;background:#3cc45c;border:3px solid #e8e8e8;border-top:0;outline:1px solid #aaa;outline-offset:-1px;box-shadow:0 3px 8px rgba(0,0,0,.4);color:#fff;font-weight:700;text-align:center}
div{font-family:"Liberation Sans",sans-serif;line-height:14px}
`, () => `<div>75</div>`);

define("red-mark", `
:host{position:absolute;left:1045px;top:179px;width:264px;height:174px;pointer-events:none}
svg{display:block}
`, () => `<svg width="264" height="174" aria-hidden="true"><ellipse cx="132" cy="87" rx="128" ry="83" fill="none" stroke="#f00" stroke-width="7"/></svg>`);

define("ggj-desktop", `
:host{display:flex;flex-direction:column;height:100vh;position:relative;overflow:hidden}
.work{flex:1;display:flex;gap:6px;min-height:0}
.right{flex:1;display:flex;flex-direction:column;min-width:0;gap:1px}
.body{flex:1;display:flex;gap:3px;min-height:0}
nav-panel{margin-bottom:2px;flex:none}
component-panel{margin:5px 0 3px;flex:none}
property-panel{flex:1}
`, () => `<title-bar></title-bar><menu-row></menu-row><tool-row></tool-row>
<div class="work"><nav-panel></nav-panel><div class="right"><edit-row></edit-row><div class="body"><component-panel></component-panel><property-panel></property-panel></div></div></div>
<status-bar></status-bar><task-bar></task-bar>
<ime-bar></ime-bar><speed-ball></speed-ball><assist-dialog></assist-dialog><red-mark></red-mark>`);
</script>
</body>
</html>
